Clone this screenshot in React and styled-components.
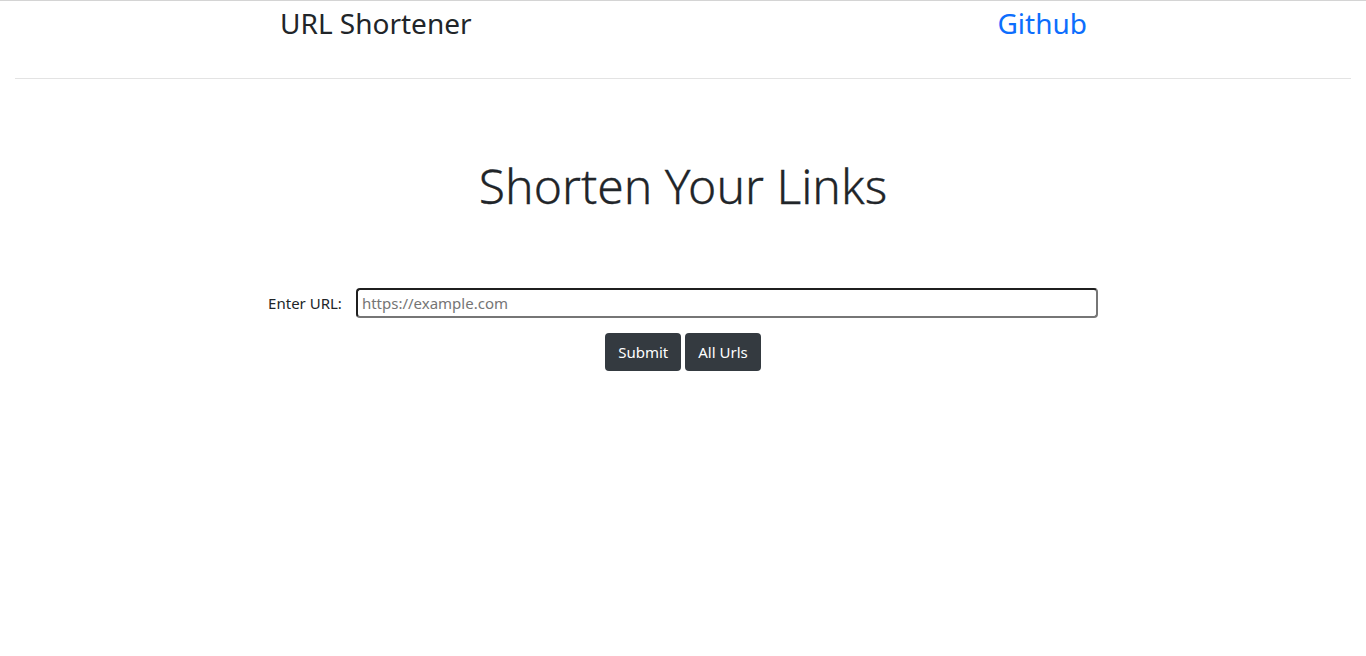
import React from 'react';
import styled, { createGlobalStyle } from 'styled-components';

const GlobalStyle = createGlobalStyle`
  html, body {
    margin: 0;
    padding: 0;
    background: #ffffff;
  }
  body {
    font-family: "Noto Sans", "Open Sans", sans-serif;
    color: #212529;
    border-top: 1px solid #d4d4d4;
  }
`;

const App = () => {
  return (
    <>
      <GlobalStyle />
      <Header>
        <Brand>URL Shortener</Brand>
        <NavLink href="#">Github</NavLink>
      </Header>
      <Divider />
      <Main>
        <Title>Shorten Your Links</Title>
        <Form onSubmit={(e) => e.preventDefault()}>
          <Field>
            <Label htmlFor="url">Enter URL:</Label>
            <Input id="url" type="text" placeholder="https://example.com" />
          </Field>
          <Actions>
            <Button type="submit">Submit</Button>
            <Button type="button">All Urls</Button>
          </Actions>
        </Form>
      </Main>
    </>
  );
};

// Styled components
const Header = styled.header`
  display: flex;
  justify-content: space-between;
  align-items: flex-start;
  padding: 2px 279px 0 280px;
  height: 75px;
`;

const Brand = styled.span`
  font-size: 28px;
  line-height: 40px;
  color: #212529;
`;

const NavLink = styled.a`
  font-size: 28px;
  line-height: 40px;
  color: #0d6efd;
  text-decoration: none;
`;

const Divider = styled.hr`
  margin: 0 15px;
  border: 0;
  border-top: 1px solid #e3e3e3;
`;

const Main = styled.main`
  display: flex;
  flex-direction: column;
  align-items: center;
  padding-top: 76px;
`;

const Title = styled.h1`
  margin: 0;
  font-size: 48px;
  font-weight: 300;
  line-height: 62px;
  color: #212529;
  -webkit-text-stroke: 0.3px #212529;
`;

const Form = styled.form`
  display: flex;
  flex-direction: column;
  align-items: center;
  margin-top: 71px;
`;

const Field = styled.div`
  display: flex;
  align-items: center;
  gap: 14px;
`;

const Label = styled.label`
  font-size: 15px;
  color: #212529;
`;

const Input = styled.input`
  box-sizing: border-box;
  width: 742px;
  height: 30px;
  padding: 0 4px;
  border: 2px solid #1f1f1f;
  border-bottom-color: #767676;
  border-right-color: #767676;
  border-radius: 4px;
  font-family: "Noto Sans", "Open Sans", sans-serif;
  font-size: 15px;
  color: #212529;
  outline: none;

  &::placeholder {
    color: #757575;
  }
`;

const Actions = styled.div`
  display: flex;
  gap: 4px;
  margin-top: 15px;
`;

const Button = styled.button`
  height: 38px;
  padding: 0 13px;
  border: 0;
  border-radius: 4px;
  background: #343a40;
  color: #ffffff;
  font-family: "Noto Sans", "Open Sans", sans-serif;
  font-size: 15px;
  cursor: pointer;
`;

export default App;
